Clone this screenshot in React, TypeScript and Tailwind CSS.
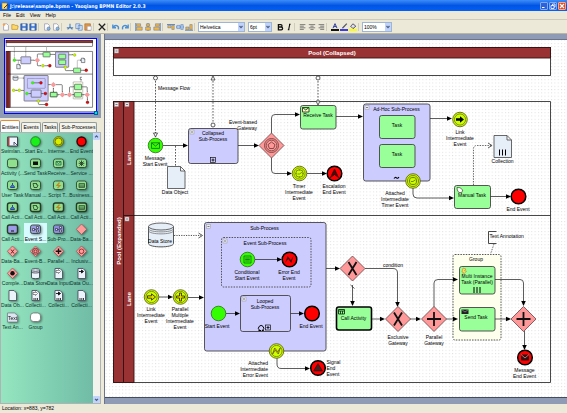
import React, { useState } from "react";

type Kids = { children?: React.ReactNode };

const INK = "#333";

/* ---------- Diagram primitives ---------- */

type LabelProps = { x: number; y: number; lines: string[]; anchor?: "start" | "middle" | "end" };

function Label({ x, y, lines, anchor = "middle" }: LabelProps) {
  return (
    <text x={x} y={y + 2} textAnchor={anchor} fill="#000" stroke="none">
      {lines.map((line, i) => (
        <tspan key={line} x={x} dy={i === 0 ? 0 : 6}>
          {line}
        </tspan>
      ))}
    </text>
  );
}

function Head({ x, y, dir = "right" }: { x: number; y: number; dir?: "right" | "down" }) {
  const points = dir === "right" ? `${x},${y} ${x - 5},${y - 2.3} ${x - 5},${y + 2.3}` : `${x},${y} ${x - 2.3},${y - 5} ${x + 2.3},${y - 5}`;
  return <polygon points={points} fill="#000" stroke="none" />;
}

function Flow({ d, x, y, dir }: { d: string; x: number; y: number; dir?: "right" | "down" }) {
  return (
    <g>
      <path d={d} fill="none" stroke={INK} strokeWidth="0.8" />
      <Head x={x} y={y} dir={dir} />
    </g>
  );
}

function Toggle({ x, y }: { x: number; y: number }) {
  return (
    <g data-glyph>
      <rect x={x} y={y} width="4" height="4" fill="#e8eaf2" stroke="#999" strokeWidth="0.5" />
      <path d={`M${x + 1} ${y + 2}h2`} stroke="#333" strokeWidth="0.6" />
    </g>
  );
}

function Plus({ x, y }: { x: number; y: number }) {
  return (
    <g data-glyph stroke="#111" fill="none">
      <rect x={x - 2.5} y={y - 2.5} width="5" height="5" strokeWidth="0.7" />
      <path d={`M${x - 1.5} ${y}h3M${x} ${y - 1.5}v3`} strokeWidth="0.9" />
    </g>
  );
}

function Box({ x, y, w, h, fill = "#99ff99", thick = false }: { x: number; y: number; w: number; h: number; fill?: string; thick?: boolean }) {
  return <rect x={x} y={y} width={w} height={h} rx="2.2" fill={fill} stroke={thick ? "#000" : "#444"} strokeWidth={thick ? 1.6 : 0.9} />;
}

function Start({ x, y, children }: { x: number; y: number } & Kids) {
  return (
    <g transform={`translate(${x} ${y})`}>
      <circle r="7.3" fill="#33ff00" stroke="#336622" strokeWidth="0.8" />
      <g data-glyph>{children}</g>
    </g>
  );
}

function Mid({ x, y, children }: { x: number; y: number } & Kids) {
  return (
    <g transform={`translate(${x} ${y})`}>
      <circle r="7.3" fill="#ccff00" stroke="#555511" strokeWidth="0.8" />
      <circle r="5.6" fill="none" stroke="#666611" strokeWidth="0.7" />
      <g data-glyph>{children}</g>
    </g>
  );
}

function End({ x, y, children }: { x: number; y: number } & Kids) {
  return (
    <g transform={`translate(${x} ${y})`}>
      <circle r="7.3" fill="#ff0000" stroke="#000" strokeWidth="1.5" />
      <g data-glyph>{children}</g>
    </g>
  );
}

function Gateway({ x, y, children }: { x: number; y: number } & Kids) {
  return (
    <g transform={`translate(${x} ${y})`}>
      <polygon points="0,-12.5 12.5,0 0,12.5 -12.5,0" fill="#ff9999" stroke="#664444" strokeWidth="0.8" />
      <g data-glyph>{children}</g>
    </g>
  );
}

function Clock() {
  return (
    <g fill="none" stroke="#555511" strokeWidth="0.7">
      <circle r="3.8" />
      <path d="M0 .5L2.4-1.2M0 .5h-2M0-3.8v1M0 3.8v-1M3.8 0h-1M-3.8 0h1" />
    </g>
  );
}

function Page({ x, y, h = 22 }: { x: number; y: number; h?: number }) {
  return (
    <path
      d={`M${x} ${y}h13l4.5 4.5v${h - 4.5}h-17.5zM${x + 13} ${y}v4.5h4.5`}
      fill="#e6eef8"
      stroke="#444"
      strokeWidth="0.8"
    />
  );
}

function MessageFlow({ x, top, bottom, up = false }: { x: number; top: number; bottom: number; up?: boolean }) {
  const circleY = up ? bottom : top;
  return (
    <g stroke="#333" strokeWidth="0.8" fill="#fff">
      <path d={`M${x} ${top}V${bottom}`} strokeDasharray="1.6 1.4" fill="none" />
      <circle cx={x} cy={circleY} r="2" />
      {up ? (
        <polygon points={`${x},${top - 2} ${x - 2},${top + 2} ${x + 2},${top + 2}`} />
      ) : (
        <polygon points={`${x},${bottom} ${x - 2},${bottom - 4} ${x + 2},${bottom - 4}`} />
      )}
    </g>
  );
}

function Diagram() {
  return (
    <g>
      {/* Pools and lanes */}
      <rect x="113.5" y="47.5" width="437" height="28" fill="#fff" stroke="#333" strokeWidth="0.9" />
      <rect x="113.5" y="47.5" width="437" height="10.5" fill="#993333" stroke="#331111" strokeWidth="0.9" />
      <path d="M113.5 101.5H550.5V382.5H113.5zM134 215.5H550.5" fill="none" stroke="#333" strokeWidth="0.9" />
      <rect x="113.5" y="101.5" width="10" height="281" fill="#993333" stroke="#331111" strokeWidth="0.9" />
      <rect x="123.5" y="101.5" width="10.5" height="114" fill="#993333" stroke="#331111" strokeWidth="0.9" />
      <rect x="123.5" y="215.5" width="10.5" height="167" fill="#993333" stroke="#331111" strokeWidth="0.9" />
      <g fill="#fff" className="text-[6px] font-bold" textAnchor="middle">
        <text x="332" y="55">Pool (Collapsed)</text>
        <text transform="translate(121 241) rotate(-90)">Pool (Expanded)</text>
        <text transform="translate(131 158) rotate(-90)">Lane</text>
        <text transform="translate(131 299) rotate(-90)">Lane</text>
      </g>
      <Toggle x={114.5} y={49} />
      <Toggle x={114.5} y={102.5} />
      <Toggle x={125} y={102.5} />
      <Toggle x={125} y={217} />

      <MessageFlow x={155.5} top={78} bottom={137} />
      <MessageFlow x={213} top={78} bottom={125} up />
      <MessageFlow x={318} top={78} bottom={105} />
      <Label x={158} y={88} lines={["Message Flow"]} anchor="start" />

      {/* Upper lane */}
      <path d="M175.5 146V166" stroke="#333" strokeWidth="0.8" strokeDasharray="1.6 1.4" />
      <Start x={155.5} y={145.5}>
        <path d="M-4-2.7h8v5.6h-8zM-4-2.7L0 .6 4-2.7" fill="none" stroke="#146614" strokeWidth="0.8" />
      </Start>
      <Label x={155} y={158} lines={["Message", "Start Event"]} />
      <Flow d="M163 145.5H184" x={188} y={145.5} />
      <Box x={188.5} y={128.5} w={49.5} h={35} fill="#ccccff" />
      <Toggle x={190} y={130} />
      <Label x={213} y={133} lines={["Collapsed", "Sub-Process"]} />
      <Plus x={213} y={160} />
      <Page x={167.5} y={166.5} />
      <Label x={175} y={192} lines={["Data Object"]} />
      <Flow d="M238 145.5H255" x={259} y={145.5} />
      <Label x={257} y={122} lines={["Event-based", "Gateway"]} anchor="end" />
      <Gateway x={271.5} y={145.5}>
        <g fill="none" stroke="#774040" strokeWidth="0.9">
          <circle r="7" />
          <circle r="5.4" />
          <polygon points="0,-3.5 3.5,-.8 2.1,3 -2.1,3 -3.5,-.8" />
        </g>
      </Gateway>
      <Flow d="M271.5 133V118Q271.5 114.5 275 114.5H296" x={300} y={114.5} />
      <Flow d="M271.5 158V170Q271.5 173.5 275 173.5H288" x={292} y={173.5} />
      <Box x={300.5} y={105.5} w={35.5} h={23.5} />
      <path data-glyph d="M302.5 107.5h6.5v4.5h-6.5zM302.5 107.5l3.2 2.5 3.3-2.5" fill="#fff8c0" stroke="#332" strokeWidth="0.9" />
      <Label x={318} y={115} lines={["Receive Task"]} />
      <Flow d="M307 173.5H323" x={327} y={173.5} />
      <Mid x={299.5} y={173.5}>
        <Clock />
      </Mid>
      <End x={334.5} y={173.5}>
        <path d="M0-4.5L4 4 0 1-4 4z" fill="#401010" stroke="#200" strokeWidth="0.6" />
      </End>
      <Label x={299} y={186} lines={["Timer", "Intermediate", "Event"]} />
      <Label x={334} y={186} lines={["Escalation", "End Event"]} />
      <Flow d="M336 116.5H359" x={363} y={116.5} />
      <Box x={363.5} y={104} w={66.5} h={77} fill="#ccccff" />
      <Toggle x={365} y={105.5} />
      <Label x={396.5} y={109} lines={["Ad-Hoc Sub-Process"]} />
      <Box x={379.5} y={115.5} w={35.5} h={23} />
      <Box x={379.5} y={144.5} w={35.5} h={23} />
      <Label x={397} y={125} lines={["Task"]} />
      <Label x={397} y={154} lines={["Task"]} />
      <path data-glyph d="M394 178.5q1.3-1.8 2.5-.7t2.5-.6" fill="none" stroke="#000" strokeWidth="1.1" />
      <Flow d="M413 188V194Q413 198 417 198H450" x={454} y={198} />
      <Mid x={413} y={181}>
        <Clock />
      </Mid>
      <Label x={395} y={193} lines={["Attached", "Intermediate", "Timer Event"]} />
      <Flow d="M430 118.5H448" x={452} y={118.5} />
      <Mid x={460} y={119.5}>
        <path d="M-4-1.3h4v-2L4 0 0 3.3v-2h-4z" fill="#000" />
      </Mid>
      <Label x={460} y={132} lines={["Link", "Intermediate", "Event"]} />
      <path d="M473.5 185V149Q473.5 145.5 477 145.5H491" fill="none" stroke="#444" strokeWidth="0.8" strokeDasharray="1.4 1.2" />
      <path d="M488 143l4 2.5-4 2.5" fill="none" stroke="#333" strokeWidth="0.8" />
      <Page x={494} y={135.5} />
      <path data-glyph d="M499.5 149.5v6M502.5 149.5v6M505.5 149.5v6" stroke="#000" />
      <Label x={502.5} y={161} lines={["Collection"]} />
      <Box x={454.5} y={185.5} w={36} h={23} />
      <path data-glyph d="M457 187.5l3 .2 2.8 2.3-1 2.5h-3l-1.5-2.5z" fill="#fff" stroke="#554" strokeWidth="0.8" />
      <Label x={472} y={195} lines={["Manual Task"]} />
      <Flow d="M490.5 196.5H507" x={511} y={196.5} />
      <End x={518.5} y={196.5} />
      <Label x={518} y={209} lines={["End Event"]} />

      {/* Lower lane */}
      <path d="M148.5 226.5v17c0 4.5 25 4.5 25 0v-17" fill="#e6eef8" stroke="#444" strokeWidth="0.9" />
      <ellipse cx="161" cy="226.5" rx="12.5" ry="3.5" fill="#e6eef8" stroke="#444" strokeWidth="0.8" />
      <path d="M148.5 228.5c0 4.5 25 4.5 25 0M148.5 230.5c0 4.5 25 4.5 25 0" fill="none" stroke="#666" strokeWidth="0.7" />
      <Label x={160} y={241} lines={["Data Store"]} />
      <path d="M174 235.5H201" stroke="#444" strokeWidth="0.9" strokeDasharray="1.2 1.2" />
      <path d="M198.5 233l4 2.5-4 2.5" fill="none" stroke="#333" strokeWidth="0.8" />
      <Box x={204.5} y={222.5} w={121.5} h={128.5} fill="#ccccff" />
      <Toggle x={206.5} y={224.5} />
      <Label x={264.5} y={228} lines={["Sub-Process"]} />
      <rect x="221.5" y="237.5" width="89.5" height="49.5" rx="2" fill="none" stroke="#444" strokeWidth="0.9" strokeDasharray="1.5 1.2" />
      <Toggle x={223} y={239} />
      <Label x={265} y={243} lines={["Event Sub-Process"]} />
      <Start x={247.5} y={259.5}>
        <path d="M-3.5-3.5h7v7h-7zM-2.3-1.5h4.6M-2.3 0h4.6M-2.3 1.5h4.6" fill="none" stroke="#146614" strokeWidth="0.8" />
      </Start>
      <Flow d="M255 259.5H278" x={282} y={259.5} />
      <End x={289.5} y={259.5}>
        <path d="M-4.5 3.5L-1.8-3.5 1.3.5 4-3.5 1.8 3.5-1.3-.5z" fill="#401010" />
      </End>
      <Label x={247} y={272} lines={["Conditional", "Start Event"]} />
      <Label x={289} y={272} lines={["Error End", "Event"]} />
      <Box x={240.5} y={295.5} w={50} h={36} fill="#ccccff" />
      <Toggle x={242} y={297} />
      <Label x={265} y={301} lines={["Looped", "Sub-Process"]} />
      <path data-glyph d="M259.5 330.2a2.6 2.6 0 1 1 3.2 0M258.5 330.5h2.5M261.8 330.5h2" fill="none" stroke="#000" />
      <Plus x={268} y={327.5} />
      <Flow d="M226 313.5H236" x={240} y={313.5} />
      <Start x={218.5} y={313.5} />
      <Label x={217} y={326} lines={["Start Event"]} />
      <Flow d="M290.5 313.5H300" x={304} y={313.5} />
      <End x={312} y={313.5} />
      <Label x={311} y={326} lines={["End Event"]} />

      <Flow d="M159 297H169" x={173} y={297} />
      <Flow d="M188 297.5H200" x={204} y={297.5} />
      <Mid x={151.5} y={297}>
        <path d="M-4-1.2h4v-2L4 0 0 3.2v-2h-4z" fill="#dddd00" stroke="#443300" strokeWidth="0.9" />
      </Mid>
      <Mid x={180.5} y={297}>
        <path d="M-1-4h2v3h3v2h-3v3h-2v-3h-3v-2h3z" fill="#dddd00" stroke="#443300" strokeWidth="0.9" />
      </Mid>
      <Label x={151} y={309} lines={["Link", "Intermediate", "Event"]} />
      <Label x={180} y={309} lines={["Parallel", "Multiple", "Intermediate", "Event"]} />

      <Flow d="M277 358V364Q277 368.5 281 368.5H306" x={310} y={368.5} />
      <Mid x={276.5} y={351}>
        <path d="M-4 3.2L-1.8-3 1.3.8 3.8-3.2 1.8 3-1.3-.8z" fill="#dddd00" stroke="#665511" strokeWidth="0.8" />
      </Mid>
      <Label x={268} y={363} lines={["Attached", "Intermediate", "Error Event"]} anchor="end" />
      <End x={318} y={368}>
        <path d="M0-4.5L4.5 3h-9z" fill="#442222" stroke="#300" strokeWidth="0.5" />
      </End>
      <Label x={326.5} y={362} lines={["Signal", "End", "Event"]} anchor="start" />

      <Flow d="M326 268.5H336" x={340} y={268.5} />
      <Flow d="M365 268.5H393Q397.5 268.5 397.5 273V303" x={397.5} y={307} dir="down" />
      <Gateway x={352.5} y={268.5}>
        <path d="M-4-6.5L4 6.5M4-6.5L-4 6.5" stroke="#111" strokeWidth="1.8" />
      </Gateway>
      <Label x={393} y={265} lines={["condition"]} />
      <Flow d="M352.5 285V303M350.5 285l4 3.5" x={352.5} y={306} dir="down" />
      <Box x={336.5} y={307} w={35} h={23} thick />
      <path data-glyph d="M338.5 309.5h6v4.5h-6zM338.5 311h6M340.5 311v3M342.5 311v3" fill="none" stroke="#131" strokeWidth="0.9" />
      <Label x={353.5} y={318} lines={["Call Activity"]} />
      <Flow d="M372 319H381" x={385} y={319} />
      <Gateway x={398} y={319}>
        <path d="M-4-6.5L4 6.5M4-6.5L-4 6.5" stroke="#111" strokeWidth="1.8" />
      </Gateway>
      <Label x={398} y={337} lines={["Exclusive", "Gateway"]} />
      <Flow d="M410 319H417" x={421} y={319} />
      <rect x="453" y="254.5" width="48" height="85.5" rx="2" fill="#ffffee" stroke="#444" strokeWidth="0.9" strokeDasharray="1.5 1.2" />
      <Label x={476} y={259} lines={["Group"]} />
      <Flow d="M434 307V283Q434 279.5 438 279.5H454" x={458} y={279.5} />
      <Flow d="M446 319H454" x={458} y={319} />
      <Gateway x={434} y={319}>
        <path d="M-7 0H7M0-7V7" stroke="#111" strokeWidth="1.8" />
      </Gateway>
      <Label x={434} y={337} lines={["Parallel", "Gateway"]} />
      <Box x={459.5} y={266.5} w={35.5} h={27.5} />
      <path data-glyph d="M463 268l3 1-1.5 1.7 2 .5-3.8 4 .7-2.8-1.5-.4z" fill="#ffdd55" stroke="#aa7733" strokeWidth="0.5" />
      <Label x={477} y={276} lines={["Multi Instance", "Task (Parallel)"]} />
      <path data-glyph d="M474 287v6M477 287v6M480 287v6" stroke="#000" />
      <Box x={459.5} y={307.5} w={35.5} h={23.5} />
      <path data-glyph d="M461.5 309.5h7v4.5h-7z" fill="#222" />
      <path data-glyph d="M461.5 309.5l3.5 2.5 3.5-2.5" fill="none" stroke="#aaa" strokeWidth="0.6" />
      <Label x={476} y={317} lines={["Send Task"]} />
      <Flow d="M495 279.5H520Q523.5 279.5 523.5 283V302" x={523.5} y={306} dir="down" />
      <Flow d="M495 319H507" x={511} y={319} />
      <Flow d="M524.5 331V346" x={524.5} y={350} dir="down" />
      <Gateway x={523.5} y={319}>
        <path d="M-7 0H7M0-7V7" stroke="#111" strokeWidth="1.8" />
      </Gateway>
      <End x={525} y={357.5}>
        <path d="M-4-3h8v6h-8z" fill="#331111" />
        <path d="M-4-3L0 .5 4-3" fill="none" stroke="#dd8888" strokeWidth="0.8" />
      </End>
      <Label x={524.5} y={370} lines={["Message", "End Event"]} />
      <path d="M496.5 231.5H488.5V243.5H496.5" fill="none" stroke="#333" strokeWidth="0.9" />
      <path d="M494 244L490.5 254" stroke="#444" strokeWidth="0.8" strokeDasharray="1.4 1.2" />
      <Label x={489.5} y={236} lines={["Text Annotation"]} anchor="start" />
    </g>
  );
}

/* ---------- Toolbar ---------- */

const glyphs: Record<string, React.ReactNode> = {
  New: (
    <g>
      <path d="M2 1h4l2 2v6H2z" fill="#fff" stroke="#88a" strokeWidth=".8" />
      <circle cx="2.500" cy="2" r="1.500" fill="#ffa040" />
    </g>
  ),
  Open: <path d="M1 8V2h3l1 1h3v1h1L8 8z" fill="#ffd764" stroke="#b08a30" strokeWidth=".8" />,
  Save: (
    <g>
      <path d="M1 1h8v8H1z" fill="#3a6fc8" stroke="#234a90" strokeWidth=".8" />
      <path d="M3 1h4v3H3zM3 6h4v3H3z" fill="#dfe9f8" />
    </g>
  ),
  Print: (
    <g>
      <path d="M2 1h4l2 2v6H2z" fill="#fff" stroke="#88a" strokeWidth=".8" />
      <circle cx="7" cy="7" r="2" fill="#8ab8e8" stroke="#468" strokeWidth=".6" />
    </g>
  ),
  Cut: <path d="M5 1v4l-3 3M5 5l3 3M1 6h8" stroke="#4a80c0" strokeWidth="1.4" fill="none" />,
  Copy: <path d="M1 1h5v6H1zM4 3h5v6H4z" fill="#dce9fa" stroke="#4a78b8" strokeWidth=".8" />,
  Paste: (
    <g>
      <path d="M1 1h7v8H1z" fill="#e09848" stroke="#a8642c" strokeWidth=".8" />
      <path d="M4 4h5v5H4z" fill="#fff" stroke="#88a" strokeWidth=".6" />
    </g>
  ),
  Delete: <path d="M1 1l8 8M9 1L1 9" stroke="#222" strokeWidth="1.6" />,
  Undo: <path d="M1 2v4h4M1.5 5.5C4 1.5 9 3 8 8" stroke="#4a90d8" strokeWidth="1.7" fill="none" />,
  Redo: <path d="M9 2v4H5M8.5 5.5C6 1.5 1 3 2 8" stroke="#4a90d8" strokeWidth="1.7" fill="none" />,
  AlignLeft: (
    <g>
      <path d="M1 0v10" stroke="#3468b8" />
      <path d="M2 1h5v3H2zM2 5h7v4H2z" fill="#f5b83d" stroke="#5070b0" strokeWidth=".6" />
    </g>
  ),
  AlignCenter: (
    <g>
      <path d="M5 0v10" stroke="#3468b8" />
      <path d="M3 1h4v3H3zM2 5h6v4H2z" fill="#f5b83d" stroke="#5070b0" strokeWidth=".6" />
    </g>
  ),
  AlignRight: (
    <g>
      <path d="M9 0v10" stroke="#3468b8" />
      <path d="M3 1h5v3H3zM1 5h7v4H1z" fill="#f5b83d" stroke="#5070b0" strokeWidth=".6" />
    </g>
  ),
  AlignTop: (
    <g>
      <path d="M0 2h10" stroke="#3468b8" />
      <path d="M1 3h4v3H1zM6 3h3v5H6z" fill="#f5b83d" stroke="#5070b0" strokeWidth=".6" />
    </g>
  ),
  AlignMiddle: (
    <g>
      <path d="M0 5h10" stroke="#3468b8" />
      <path d="M1 3h4v4H1zM6 2h3v6H6z" fill="#a8cdf5" stroke="#5070b0" strokeWidth=".6" />
    </g>
  ),
  AlignBottom: (
    <g>
      <path d="M0 9h10" stroke="#3468b8" />
      <path d="M1 5h4v3H1zM6 2h3v6H6z" fill="#f5b83d" stroke="#5070b0" strokeWidth=".6" />
    </g>
  ),
  Bold: <path d="M3 2h3a1.500 1.500 0 0 1 0 3H3h3.500a1.500 1.500 0 0 1 0 3.500H3z" stroke="#111" strokeWidth="1.600" fill="none" />,
  Italic: <path d="M5 1.500h2M3.500 8.500h2M6 1.500L4.500 8.500" stroke="#111" strokeWidth="1.400" />,
  TextLeft: <path d="M1 2h7M1 4h5M1 6h7M1 8h5" stroke="#555" strokeWidth=".9" />,
  TextCenter: <path d="M1 2h8M3 4h4M1 6h8M3 8h4" stroke="#555" strokeWidth=".9" />,
  TextRight: <path d="M2 2h7M4 4h5M2 6h7M4 8h5" stroke="#555" strokeWidth=".9" />,
  FontColor: (
    <g>
      <path d="M2.500 6.500L5 .8l2.500 5.700M3.500 4.500h3" stroke="#2838a0" strokeWidth="1.200" fill="none" />
      <path d="M0 7.500h10v2.500H0z" fill="#111" />
    </g>
  ),
  LineColor: (
    <g>
      <path d="M3 6.500L8.500 .8" stroke="#556" strokeWidth="1.600" />
      <path d="M0 7.500h10v2.500H0z" fill="#3b3be0" />
    </g>
  ),
  FillColor: (
    <g>
      <path d="M5 1l3.500 3L5 7 2 4z" fill="#dde" stroke="#334" strokeWidth="1" />
      <path d="M0 7.500h10v2.500H0z" fill="#ffff00" />
    </g>
  ),
};

function Tool({ name, icon }: { name: string; icon: string }) {
  return (
    <button type="button" aria-label={name} className="flex w-[9px] items-center justify-center">
      <svg viewBox="0 0 10 10" className="size-[8px]">
        {glyphs[icon]}
      </svg>
    </button>
  );
}

function Group({ children }: Kids) {
  return <div className="flex border-r border-[#d0ccba] pr-px">{children}</div>;
}

function Pick({ label, options, width }: { label: string; options: string[]; width: string }) {
  return (
    <div className={"relative h-[10px] border border-[#9fb6d3] bg-white " + width}>
      <select aria-label={label} className="block h-[8px] w-full appearance-none bg-transparent pl-px text-[5px] leading-[8px] text-black outline-none">
        {options.map((o) => (
          <option key={o}>{o}</option>
        ))}
      </select>
      <svg viewBox="0 0 6 8" className="pointer-events-none absolute inset-y-0 right-0 h-[8px] w-[6px] bg-[#c2d3fb]">
        <path d="M1.500 3L3 4.700 4.500 3" fill="none" stroke="#4d6185" strokeWidth="1.200" />
      </svg>
    </div>
  );
}

/* ---------- Palette ---------- */

function TaskIcon({ fill = "#8fdf8f", thick = false, children }: { fill?: string; thick?: boolean } & Kids) {
  return (
    <g>
      <rect x="1.500" y="2" width="10" height="8.500" rx="2" fill={fill} stroke="#243c24" strokeWidth={thick ? 1.4 : 0.8} />
      {children}
    </g>
  );
}

function GateIcon({ children }: Kids) {
  return (
    <g>
      <polygon points="6.5,1 11.7,6.3 6.5,11.5 1.3,6.3" fill="#ff9c9c" stroke="#904848" strokeWidth=".6" />
      {children}
    </g>
  );
}

function DocIcon({ children }: Kids) {
  return (
    <g>
      <path d="M3 1.500h5l2.500 2.500v7.500H3z" fill="#edf3fa" stroke="#445" strokeWidth=".8" />
      {children}
    </g>
  );
}

const mail = <path d="M4 4.500h5v3.500H4zM4 4.500L6.500 6.500 9 4.500" fill="none" stroke="#264" strokeWidth=".8" />;
const mailDark = <path d="M4 4.500h5v3.500H4z" fill="#111" />;
const user = <path d="M6.500 4v2M4.500 8.500c0-3 4-3 4 0z" fill="#5578cc" stroke="#2848a0" strokeWidth="1" />;
const hand = <path d="M4 4.500h4M4 4.500l1 4h3l1-2.500-2-.5" fill="none" stroke="#243c24" strokeWidth=".8" />;
const script = <path d="M7.500 3.500L5 6.500h3L5.500 9" fill="none" stroke="#c08820" strokeWidth="1.200" />;
const rows = <path d="M4 4.500h5.500v4H4zM4 6h5.500M4 7.300h5.500" fill="none" stroke="#264026" strokeWidth=".7" />;
const gear = <path d="M4.500 4.500l4 4M8.500 4.500l-4 4M6.500 3.500v5.500M3.700 6.300h5.600" stroke="#264026" strokeWidth=".9" />;
const nodes = <path d="M3.500 5.500h2v2h-2zM7.500 3.500h2v2h-2zM7.500 7h2v2h-2zM5.500 6.500h2" fill="#dde" stroke="#223" strokeWidth=".6" />;
const arrow = <path d="M4 4.500h3M6.500 3l2 1.500-2 1.500z" fill="#111" stroke="#111" strokeWidth=".9" />;
const bars = <path d="M5 9v2M6.800 9v2M8.500 9v2" stroke="#111" strokeWidth=".8" />;
const arrowOpen = <path d="M4 3.500h2.500v-1l2 2-2 2v-1H4z" fill="#fff" stroke="#444" strokeWidth=".6" />;

const palette: { name: string; icon: React.ReactNode }[] = [
  {
    name: "Swimlan...",
    icon: (
      <g>
        <path d="M1.500 2h10v9h-10z" fill="#f0f4fc" stroke="#223" strokeWidth=".8" />
        <path d="M1.500 2h2v9h-2z" fill="#a04848" />
        <path d="M8 7l3 3M8 7v3" stroke="#446" strokeWidth=".9" />
      </g>
    ),
  },
  { name: "Start Ev...", icon: <circle cx="6.500" cy="6.500" r="4.800" fill="#19f019" stroke="#186018" strokeWidth=".7" /> },
  {
    name: "Interme...",
    icon: (
      <g fill="#d8f000" stroke="#505800" strokeWidth=".8">
        <circle cx="6.500" cy="6.500" r="4.800" />
        <circle cx="6.500" cy="6.500" r="3.500" />
      </g>
    ),
  },
  { name: "End Event", icon: <circle cx="6.500" cy="6.500" r="4.500" fill="#ff0000" stroke="#300" strokeWidth="1.400" /> },
  { name: "Activity (...", icon: <TaskIcon /> },
  { name: "Send Task", icon: <TaskIcon>{mailDark}</TaskIcon> },
  { name: "Receive...", icon: <TaskIcon>{mail}</TaskIcon> },
  { name: "Service ...", icon: <TaskIcon>{gear}</TaskIcon> },
  { name: "User Task", icon: <TaskIcon>{user}</TaskIcon> },
  { name: "Manual ...", icon: <TaskIcon>{hand}</TaskIcon> },
  { name: "Script T...", icon: <TaskIcon>{script}</TaskIcon> },
  { name: "Business...", icon: <TaskIcon>{rows}</TaskIcon> },
  { name: "Call Acti...", icon: <TaskIcon thick>{user}</TaskIcon> },
  { name: "Call Acti...", icon: <TaskIcon thick>{hand}</TaskIcon> },
  { name: "Call Acti...", icon: <TaskIcon thick>{script}</TaskIcon> },
  { name: "Call Acti...", icon: <TaskIcon thick>{rows}</TaskIcon> },
  {
    name: "Call Acti...",
    icon: (
      <TaskIcon thick fill="#9c9ce8">
        <path d="M5 8h3" stroke="#111" />
      </TaskIcon>
    ),
  },
  { name: "Event S...", icon: <TaskIcon fill="#9c9ce0">{nodes}</TaskIcon> },
  { name: "Sub-Pro...", icon: <TaskIcon fill="#8c8cdc">{nodes}</TaskIcon> },
  { name: "Data-Ba...", icon: <GateIcon /> },
  { name: "Data-Ba...", icon: <GateIcon><path d="M5 4.500l3 4M8 4.500l-3 4" stroke="#622" strokeWidth="1" /></GateIcon> },
  { name: "Event-B...", icon: <GateIcon><g fill="none" stroke="#622" strokeWidth=".8"><circle cx="6.500" cy="6.300" r="3" /><circle cx="6.500" cy="6.300" r="1.500" /></g></GateIcon> },
  { name: "Parallel ...", icon: <GateIcon><path d="M6.500 3.500v5.600M3.700 6.300h5.600" stroke="#111" strokeWidth="1.400" /></GateIcon> },
  { name: "Inclusiv...", icon: <GateIcon><circle cx="6.500" cy="6.300" r="2.300" fill="none" stroke="#933" strokeWidth="1" /></GateIcon> },
  { name: "Comple...", icon: <GateIcon><circle cx="6.500" cy="6.300" r="2.200" fill="#111" /></GateIcon> },
  {
    name: "Data Store",
    icon: (
      <g fill="#edf3fa" stroke="#334" strokeWidth=".8">
        <path d="M2.500 3v7.500c0 1.500 8 1.500 8 0V3" />
        <ellipse cx="6.500" cy="3" rx="4" ry="1.300" />
        <path d="M2.500 5c0 1.300 8 1.300 8 0" fill="none" />
      </g>
    ),
  },
  { name: "Data Input", icon: <DocIcon>{arrowOpen}</DocIcon> },
  { name: "Data Ou...", icon: <DocIcon>{arrow}</DocIcon> },
  { name: "Data Ob...", icon: <DocIcon /> },
  { name: "Collecti...", icon: <DocIcon>{arrowOpen}{bars}</DocIcon> },
  { name: "Collecti...", icon: <DocIcon>{arrow}{bars}</DocIcon> },
  { name: "Collecti...", icon: <DocIcon>{bars}</DocIcon> },
  {
    name: "Text An...",
    icon: (
      <g>
        <path d="M1.500 2h7l3 2.500v6.500h-10z" fill="#dde6f0" stroke="#667" strokeWidth=".6" />
        <text x="2" y="8.500" className="text-[5px]" fill="#111">Text</text>
      </g>
    ),
  },
  { name: "Group", icon: <rect x="1.500" y="2" width="10" height="8.500" rx="3" fill="#fff" stroke="#666" strokeWidth=".7" /> },
];

const tabs = ["Entities", "Events", "Tasks", "Sub-Processes"];
const selected = 17;

function ScrollButton({ label, d }: { label: string; d: string }) {
  return (
    <button type="button" aria-label={label} className="block size-[7px] rounded-[1px] bg-[#c2d3fb]">
      <svg viewBox="0 0 7 7" className="size-[7px]">
        <path d={d} fill="none" stroke="#4d6185" strokeWidth="1.200" />
      </svg>
    </button>
  );
}

export default function App() {
  const [tab, setTab] = useState("Entities");
  return (
    <div className="flex h-screen w-full flex-col overflow-hidden bg-[#ece9d8] font-['Liberation_Sans',Arial,sans-serif] text-[5px] text-black">
      <header className="flex h-[11px] shrink-0 items-center gap-[1px] bg-linear-to-b from-[#3c8cf8] via-[#0054e3] to-[#0560f5] px-[1px]">
        <svg viewBox="0 0 8 8" className="size-[8px]">
          <path d="M1 1h5v6H1z" fill="#ffe070" stroke="#a87820" strokeWidth=".6" />
          <path d="M3 6l4-4" stroke="#5a3a10" />
        </svg>
        <h1 className="flex-1 text-[5px] leading-[10px] font-bold whitespace-nowrap text-white font-['DejaVu_Sans_Condensed','DejaVu_Sans',sans-serif]">
          J:\release\sample.bpmn - Yaoqiang BPMN Editor 2.0.3
        </h1>
        <button type="button" aria-label="Minimize" className="size-[8px] rounded-[1px] border border-[#7fa8f5] bg-[#2c62dc]">
          <svg viewBox="0 0 6 6"><path d="M1 4.500h2.500" stroke="#fff" /></svg>
        </button>
        <button type="button" aria-label="Restore" className="size-[8px] rounded-[1px] border border-[#7fa8f5] bg-[#2c62dc]">
          <svg viewBox="0 0 6 6"><path d="M1 2.500h3v3H1zM2.500 2.500V1H5v3H4" fill="none" stroke="#fff" strokeWidth=".8" /></svg>
        </button>
        <button type="button" aria-label="Close" className="size-[8px] rounded-[1px] border border-[#f0a890] bg-[#e0482a]">
          <svg viewBox="0 0 6 6"><path d="M1 1l4 4M5 1L1 5" stroke="#fff" strokeWidth="1.200" /></svg>
        </button>
      </header>

      <nav className="flex h-[9px] shrink-0 items-center gap-[5px] border-b border-[#cfccbd] pl-[3px] leading-[8px]">
        {["File", "Edit", "View", "Help"].map((m) => (
          <button key={m} type="button">{m}</button>
        ))}
      </nav>

      <div className="flex h-[14px] shrink-0 items-center gap-[3px] border-b border-[#b9b6a6] pl-px">
        <Group>
          <Tool name="New" icon="New" />
          <Tool name="Open" icon="Open" />
          <Tool name="Save" icon="Save" />
          <Tool name="Save as" icon="Save" />
        </Group>
        <Group>
          <Tool name="Page setup" icon="Print" />
          <Tool name="Print" icon="Print" />
        </Group>
        <Group>
          <Tool name="Cut" icon="Cut" />
          <Tool name="Copy" icon="Copy" />
          <Tool name="Paste" icon="Paste" />
        </Group>
        <Group>
          <Tool name="Delete" icon="Delete" />
        </Group>
        <Group>
          <Tool name="Undo" icon="Undo" />
          <Tool name="Redo" icon="Redo" />
        </Group>
        <Group>
          <Tool name="Align left" icon="AlignLeft" />
          <Tool name="Align center" icon="AlignCenter" />
          <Tool name="Align right" icon="AlignRight" />
        </Group>
        <Group>
          <Tool name="Align top" icon="AlignTop" />
          <Tool name="Align middle" icon="AlignMiddle" />
          <Tool name="Align bottom" icon="AlignBottom" />
        </Group>
        <Pick label="Font" options={["Helvetica", "Verdana", "Times"]} width="w-[47px]" />
        <Pick label="Font size" options={["6pt", "8pt", "9pt"]} width="w-[24px]" />
        <Group>
          <Tool name="Bold" icon="Bold" />
          <Tool name="Italic" icon="Italic" />
        </Group>
        <Group>
          <Tool name="Text left" icon="TextLeft" />
          <Tool name="Text center" icon="TextCenter" />
          <Tool name="Text right" icon="TextRight" />
        </Group>
        <Group>
          <Tool name="Font color" icon="FontColor" />
          <Tool name="Line color" icon="LineColor" />
          <Tool name="Fill color" icon="FillColor" />
        </Group>
        <Pick label="Zoom" options={["100%", "150%", "200%"]} width="w-[30px]" />
      </div>

      <div className="flex min-h-0 flex-1 gap-[3px]">
        <aside className="flex w-[101px] shrink-0 flex-col gap-[2px]">
          <div className="h-[84px] shrink-0 bg-[#8f9ab5] px-[4px] py-[4px]">
            <div className="relative h-[76px] border border-[#0000ff] bg-white">
              <svg
                viewBox="108 39 460 362"
                preserveAspectRatio="none"
                className="block h-[72px] w-full [&_[data-glyph]]:hidden [&_path]:stroke-[3px] [&_rect]:stroke-[3px] [&_text]:hidden"
              >
                <Diagram />
              </svg>
              <div className="h-[2px] bg-[#8f9ab5]" />
              <span className="absolute -right-[2px] -bottom-[2px] size-[4px] border border-[#0060a0] bg-[#00e0e0]" />
            </div>
          </div>

          <div className="flex min-h-0 flex-1 flex-col">
            <div role="tablist" className="flex h-[12px] shrink-0 items-end gap-px">
              {tabs.map((t) => (
                <button
                  key={t}
                  type="button"
                  role="tab"
                  aria-selected={t === tab}
                  onClick={() => setTab(t)}
                  className={
                    t === tab
                      ? "h-[12px] rounded-t-[2px] border border-b-0 border-x-[#919b9c] border-t-[#e68b2c] bg-[#fcfcfe] px-px leading-[10px]"
                      : "h-[10px] rounded-t-[2px] border border-b-0 border-[#919b9c] bg-[#f5f4ec] px-px leading-[9px]"
                  }
                >
                  {t}
                </button>
              ))}
            </div>
            <div className="flex min-h-0 flex-1 border border-[#aeb4b4] bg-[#fcfcfe]">
              <div className="grid min-w-0 flex-1 auto-rows-[22px] grid-cols-4 content-start bg-linear-to-r from-[#95e6c0] to-[#70bca6] pt-[2px]">
                {palette.map((item, i) => (
                  <button
                    key={i}
                    type="button"
                    className={
                      i === selected
                        ? "mb-[2px] flex flex-col items-center bg-[#d8fbff] leading-[6px] whitespace-nowrap"
                        : "mb-[2px] flex flex-col items-center leading-[6px] whitespace-nowrap text-[#0c3028]"
                    }
                  >
                    <svg viewBox="0 0 13 13" className="size-[13px] shrink-0 drop-shadow-[1px_1px_1px_rgba(0,0,0,0.45)]">
                      {item.icon}
                    </svg>
                    <span>{item.name}</span>
                  </button>
                ))}
              </div>
              <div className="flex w-[7px] shrink-0 flex-col justify-between bg-[#f3f3ee]">
                <ScrollButton label="Scroll up" d="M2 4.300L3.500 2.800 5 4.300" />
                <ScrollButton label="Scroll down" d="M2 2.800L3.500 4.300 5 2.800" />
              </div>
            </div>
          </div>
        </aside>

        <main className="flex min-w-0 flex-1 flex-col overflow-hidden border-l border-[#6c7488] bg-[#8f9ab5] pt-[5px] pb-[6px]">
          <div className="min-h-0 flex-1 overflow-hidden border-y border-t-[#6c7488] border-b-[#444c60] bg-white">
            <svg viewBox="105 40 462 358" className="block h-[358px] w-[462px]">
              <defs>
                <pattern id="grid" width="3.300" height="3.300" patternUnits="userSpaceOnUse">
                  <rect width="1" height="1" fill="#e0e0e0" />
                </pattern>
              </defs>
              <rect x="105" y="40" width="461" height="358" fill="url(#grid)" />
              <Diagram />
            </svg>
          </div>
        </main>
      </div>

      <footer className="h-[9px] shrink-0 pl-[2px] leading-[9px]">Location: x=883, y=782</footer>
    </div>
  );
}
